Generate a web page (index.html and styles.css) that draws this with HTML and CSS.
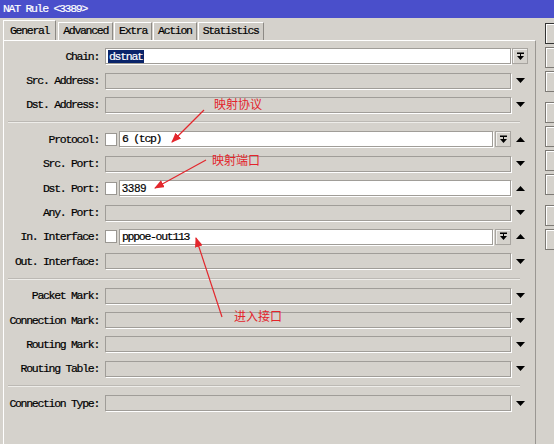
FILE: index.html
```html
<!DOCTYPE html>
<html>
<head>
<meta charset="utf-8">
<title>NAT Rule</title>
<link rel="stylesheet" href="styles.css">
</head>
<body>
<div class="titlebar">NAT Rule &lt;3389&gt;</div>
<div class="main">
  <div class="window">
    <div class="tabs">
      <div class="tab active">General</div>
      <div class="tab">Advanced</div>
      <div class="tab">Extra</div>
      <div class="tab">Action</div>
      <div class="tab">Statistics</div>
    </div>
    <div class="panel">
      <div class="group">
        <div class="row">
          <div class="lbl">Chain:</div>
          <div class="ctl"><div class="field white"><span class="sel">dstnat</span></div></div>
          <div class="ind"><div class="dd"><svg width="9" height="9" viewBox="0 0 9 9"><rect x="1" y="0.5" width="7" height="1.5" fill="#000"/><rect x="4" y="2" width="1" height="2" fill="#000"/><path d="M1 4 L8 4 L4.5 8 Z" fill="#000"/></svg></div></div>
        </div>
        <div class="row">
          <div class="lbl">Src. Address:</div>
          <div class="ctl"><div class="field"></div></div>
          <div class="ind"><svg width="9" height="5" viewBox="0 0 9 5"><path d="M0 0 L9 0 L4.5 5 Z" fill="#000"/></svg></div>
        </div>
        <div class="row">
          <div class="lbl">Dst. Address:</div>
          <div class="ctl"><div class="field"></div></div>
          <div class="ind"><svg width="9" height="5" viewBox="0 0 9 5"><path d="M0 0 L9 0 L4.5 5 Z" fill="#000"/></svg></div>
        </div>
      </div>
      <div class="sep"></div>
      <div class="group">
        <div class="row">
          <div class="lbl">Protocol:</div>
          <div class="ctl"><div class="chk"></div><div class="field white"><span class="val">6 (tcp)</span></div><div class="dd"><svg width="9" height="9" viewBox="0 0 9 9"><rect x="1" y="0.5" width="7" height="1.5" fill="#000"/><rect x="4" y="2" width="1" height="2" fill="#000"/><path d="M1 4 L8 4 L4.5 8 Z" fill="#000"/></svg></div></div>
          <div class="ind"><svg width="9" height="5" viewBox="0 0 9 5"><path d="M0 5 L9 5 L4.5 0 Z" fill="#000"/></svg></div>
        </div>
        <div class="row">
          <div class="lbl">Src. Port:</div>
          <div class="ctl"><div class="field"></div></div>
          <div class="ind"><svg width="9" height="5" viewBox="0 0 9 5"><path d="M0 0 L9 0 L4.5 5 Z" fill="#000"/></svg></div>
        </div>
        <div class="row">
          <div class="lbl">Dst. Port:</div>
          <div class="ctl"><div class="chk"></div><div class="field white"><span class="val sans">3389</span></div></div>
          <div class="ind"><svg width="9" height="5" viewBox="0 0 9 5"><path d="M0 5 L9 5 L4.5 0 Z" fill="#000"/></svg></div>
        </div>
        <div class="row">
          <div class="lbl">Any. Port:</div>
          <div class="ctl"><div class="field"></div></div>
          <div class="ind"><svg width="9" height="5" viewBox="0 0 9 5"><path d="M0 0 L9 0 L4.5 5 Z" fill="#000"/></svg></div>
        </div>
        <div class="row">
          <div class="lbl">In. Interface:</div>
          <div class="ctl"><div class="chk"></div><div class="field white"><span class="val">pppoe-out113</span></div><div class="dd"><svg width="9" height="9" viewBox="0 0 9 9"><rect x="1" y="0.5" width="7" height="1.5" fill="#000"/><rect x="4" y="2" width="1" height="2" fill="#000"/><path d="M1 4 L8 4 L4.5 8 Z" fill="#000"/></svg></div></div>
          <div class="ind"><svg width="9" height="5" viewBox="0 0 9 5"><path d="M0 5 L9 5 L4.5 0 Z" fill="#000"/></svg></div>
        </div>
        <div class="row">
          <div class="lbl">Out. Interface:</div>
          <div class="ctl"><div class="field"></div></div>
          <div class="ind"><svg width="9" height="5" viewBox="0 0 9 5"><path d="M0 0 L9 0 L4.5 5 Z" fill="#000"/></svg></div>
        </div>
      </div>
      <div class="sep"></div>
      <div class="group">
        <div class="row">
          <div class="lbl">Packet Mark:</div>
          <div class="ctl"><div class="field"></div></div>
          <div class="ind"><svg width="9" height="5" viewBox="0 0 9 5"><path d="M0 0 L9 0 L4.5 5 Z" fill="#000"/></svg></div>
        </div>
        <div class="row">
          <div class="lbl">Connection Mark:</div>
          <div class="ctl"><div class="field"></div></div>
          <div class="ind"><svg width="9" height="5" viewBox="0 0 9 5"><path d="M0 0 L9 0 L4.5 5 Z" fill="#000"/></svg></div>
        </div>
        <div class="row">
          <div class="lbl">Routing Mark:</div>
          <div class="ctl"><div class="field"></div></div>
          <div class="ind"><svg width="9" height="5" viewBox="0 0 9 5"><path d="M0 0 L9 0 L4.5 5 Z" fill="#000"/></svg></div>
        </div>
        <div class="row">
          <div class="lbl">Routing Table:</div>
          <div class="ctl"><div class="field"></div></div>
          <div class="ind"><svg width="9" height="5" viewBox="0 0 9 5"><path d="M0 0 L9 0 L4.5 5 Z" fill="#000"/></svg></div>
        </div>
      </div>
      <div class="sep"></div>
      <div class="group">
        <div class="row">
          <div class="lbl">Connection Type:</div>
          <div class="ctl"><div class="field"></div></div>
          <div class="ind"><svg width="9" height="5" viewBox="0 0 9 5"><path d="M0 0 L9 0 L4.5 5 Z" fill="#000"/></svg></div>
        </div>
      </div>
    </div>
  </div>
  <div class="side">
    <div class="btn default"></div>
    <div class="btn"></div>
    <div class="btn"></div>
    <div class="btn gap"></div>
    <div class="btn"></div>
    <div class="btn"></div>
    <div class="btn"></div>
    <div class="btn gap"></div>
    <div class="btn"></div>
  </div>
</div>

<svg class="arrows" width="554" height="444" viewBox="0 0 554 444">
  <defs>
    <marker id="ah" markerWidth="10" markerHeight="8" refX="9" refY="4" orient="auto" markerUnits="userSpaceOnUse">
      <path d="M0 0 L10 4 L0 8 Z" fill="#e3272d"/>
    </marker>
  </defs>
  <line x1="204" y1="110" x2="172" y2="142" stroke="#e3272d" stroke-width="1.2" marker-end="url(#ah)"/>
  <line x1="206" y1="160" x2="155" y2="188" stroke="#e3272d" stroke-width="1.2" marker-end="url(#ah)"/>
  <line x1="222" y1="317" x2="196" y2="238" stroke="#e3272d" stroke-width="1.2" marker-end="url(#ah)"/>
</svg>
<div class="note n1">映射协议</div>
<div class="note n2">映射端口</div>
<div class="note n3">进入接口</div>
</body>
</html>
```
FILE: styles.css
```css
* { box-sizing: border-box; }
html, body { margin: 0; padding: 0; }
body {
  width: 554px;
  height: 444px;
  overflow: hidden;
  position: relative;
  display: flex;
  flex-direction: column;
  background: #d5d2cc;
  color: #000;
  font-family: "Liberation Mono", monospace;
  font-size: 11.5px;
  letter-spacing: -1.3px;
  -webkit-text-stroke: 0.2px #000;
}
.titlebar {
  height: 18px;
  flex: none;
  background: #4a4fcb;
  color: #fff;
  -webkit-text-stroke: 0.2px #fff;
  padding-left: 3px;
  line-height: 18px;
}
.main { flex: 1; display: flex; min-height: 0; }
.window {
  width: 533px;
  flex: none;
  margin-left: 3px;
  padding-top: 2px;
  display: flex;
  flex-direction: column;
}
.tabs { display: flex; align-items: flex-end; height: 20px; flex: none; }
.tab {
  height: 18px;
  padding: 0 4px;
  line-height: 16px;
  border-top: 1px solid #fff;
  border-left: 1px solid #fff;
  border-right: 1px solid #8d8a85;
  margin-right: 1px;
  background: #d0cdc7;
}
.tab.active {
  height: 20px;
  padding: 0 6px;
  line-height: 19px;
  background: #d5d2cc;
  margin-right: 2px;
}
.panel {
  flex: 1;
  border-top: 1px solid #fff;
  border-left: 1px solid #fff;
  border-right: 1px solid #9a9792;
  padding: 3px 7px 0 0;
}
.row { display: flex; align-items: center; height: 24.4px; }
.lbl { width: 95px; flex: none; text-align: right; margin-right: 6px; white-space: nowrap; }
.ctl { flex: 1; display: flex; align-items: center; gap: 2px; }
.field {
  flex: 1;
  height: 16px;
  border: 1px solid #a09d98;
  box-shadow: 1px 1px 0 #fff;
  background: #d5d2cc;
  padding-left: 1px;
  line-height: 14px;
  white-space: nowrap;
}
.field.white { background: #fff; }
.sel {
  display: inline-block;
  background: #0a246a;
  color: #fff;
  -webkit-text-stroke: 0.2px #fff;
  padding: 0 1px;
  margin-left: 1px;
  line-height: 13px;
  margin-top: 0.5px;
}
.val { margin-left: 1px; }
.val.sans { font-family: "Liberation Sans", sans-serif; letter-spacing: 0; font-size: 11px; }
.chk {
  width: 12px;
  height: 13px;
  flex: none;
  background: #fff;
  border: 1px solid #9a9792;
}
.dd {
  width: 16px;
  height: 16px;
  flex: none;
  background: #d5d2cc;
  border: 1px solid #a8a5a0;
  box-shadow: inset 1px 1px 0 #f2f1ef;
  display: flex;
  align-items: center;
  justify-content: center;
}
.ind {
  width: 16px;
  flex: none;
  margin-left: 1px;
  display: flex;
  align-items: center;
  justify-content: center;
}
.sep {
  margin: 4px 8px 4px 4px;
  border-top: 1px solid #bcb9b4;
  border-bottom: 1px solid #eeede9;
}
.side {
  flex: 1;
  display: flex;
  flex-direction: column;
  gap: 3px;
  padding: 5px 0 0 9px;
}
.btn {
  width: 30px;
  height: 21px;
  flex: none;
  border: 1px solid #7d7a75;
  box-shadow: inset 1px 1px 0 #fff;
  background: #d5d2cc;
}
.btn.default { border-color: #333; }
.btn.gap { margin-top: 7px; }
.arrows { position: absolute; left: 0; top: 0; pointer-events: none; }
.note {
  position: absolute;
  color: #e3242b;
  -webkit-text-stroke: 0;
  font-family: "Noto Sans CJK SC", sans-serif;
  font-size: 12px;
  letter-spacing: 0;
  line-height: 14px;
}
.n1 { left: 214px; top: 97px; }
.n2 { left: 212px; top: 153px; }
.n3 { left: 234px; top: 309px; }
```
